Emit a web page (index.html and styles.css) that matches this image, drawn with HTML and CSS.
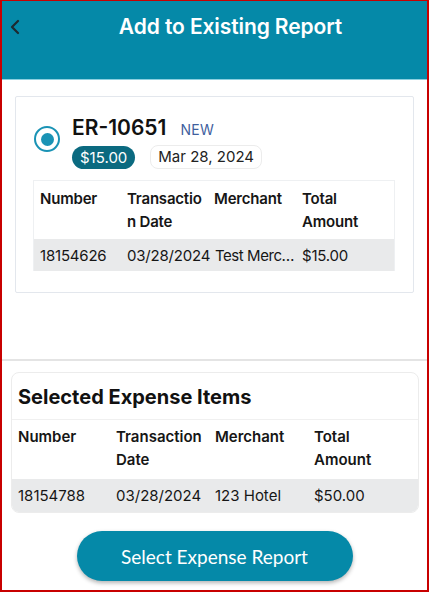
FILE: index.html
```html
<!DOCTYPE html>
<html>
<head>
<meta charset="utf-8">
<link rel="stylesheet" href="styles.css">
</head>
<body>
<div class="frame">
  <header class="topbar">
    <span class="back"><svg width="10" height="16" viewBox="0 0 10 16"><path d="M8 2 L2 8 L8 14" fill="none" stroke="#1d2a30" stroke-width="2.2" stroke-linecap="round" stroke-linejoin="round"/></svg></span>
    <h1 class="title">Add to Existing Report</h1>
  </header>

  <section class="report-card">
    <div class="report-head">
      <span class="radio"><span class="radio-dot"></span></span>
      <div class="report-info">
        <div class="report-title-row">
          <span class="report-id">ER-10651</span>
          <span class="report-status">NEW</span>
        </div>
        <div class="report-tags">
          <span class="amount-pill">$15.00</span>
          <span class="date-pill">Mar 28, 2024</span>
        </div>
      </div>
    </div>
    <div class="table t1">
      <div class="thead">
        <div class="cell">Number</div>
        <div class="cell wrap">Transaction Date</div>
        <div class="cell">Merchant</div>
        <div class="cell">Total Amount</div>
      </div>
      <div class="trow">
        <div class="cell">18154626</div>
        <div class="cell">03/28/2024</div>
        <div class="cell ellipsis">Test Merchant</div>
        <div class="cell">$15.00</div>
      </div>
    </div>
  </section>

  <div class="spacer"></div>
  <hr class="divider">

  <section class="selected-card">
    <h2 class="selected-title">Selected Expense Items</h2>
    <div class="table t2">
      <div class="thead">
        <div class="cell">Number</div>
        <div class="cell">Transaction Date</div>
        <div class="cell">Merchant</div>
        <div class="cell">Total Amount</div>
      </div>
      <div class="trow">
        <div class="cell">18154788</div>
        <div class="cell">03/28/2024</div>
        <div class="cell">123 Hotel</div>
        <div class="cell">$50.00</div>
      </div>
    </div>
  </section>

  <div class="actions">
    <button class="primary-btn">Select Expense Report</button>
  </div>
</div>
</body>
</html>
```

FILE: styles.css
```css
* { box-sizing: border-box; margin: 0; padding: 0; }
html, body { width: 429px; height: 592px; overflow: hidden; background: #fff; }
body { font-family: Inter, "Liberation Sans", sans-serif; color: #161616; }

.frame {
  width: 429px;
  height: 592px;
  border-style: solid;
  border-color: #c80000;
  border-width: 1px 2px 2px 2px;
  display: flex;
  flex-direction: column;
  background: #fff;
}

.topbar {
  height: 79px;
  flex: none;
  background: #0589a8;
  border-bottom: 1px solid #8ccfdf;
  display: flex;
  align-items: flex-start;
  justify-content: center;
  padding-left: 32px;
  position: relative;
}
.back {
  position: absolute;
  left: 8px;
  top: 18px;
  width: 10px;
  height: 16px;
  display: flex;
}
.title {
  margin-top: 13px;
  font-size: 21px;
  font-weight: 600;
  color: #fff;
  letter-spacing: -0.1px;
  line-height: 26px;
}

.report-card {
  margin: 16px 13px 0 13px;
  border: 1.5px solid #e3e7ed;
  border-radius: 2px;
  padding: 19px 17px 20px 17px;
  height: 197px;
  flex: none;
}
.report-head {
  display: flex;
  align-items: flex-start;
  gap: 12px;
}
.radio {
  margin-top: 10px;
  margin-left: 1px;
  width: 26px;
  height: 26px;
  border-radius: 50%;
  border: 2.5px solid #1a93b5;
  display: flex;
  align-items: center;
  justify-content: center;
  flex: none;
}
.radio-dot {
  width: 13px;
  height: 13px;
  border-radius: 50%;
  background: #1a93b5;
}
.report-info { display: flex; flex-direction: column; }
.report-title-row { display: flex; align-items: baseline; gap: 14px; }
.report-id { font-size: 21px; font-weight: 600; line-height: 24px; color: #111; }
.report-status { font-size: 14px; color: #3f5f9e; letter-spacing: 0.3px; }
.report-tags { display: flex; gap: 15px; margin-top: 5px; align-items: center; }
.amount-pill {
  background: #0b6a80;
  color: #fff;
  font-size: 15px;
  height: 23px;
  line-height: 23px;
  padding: 0 8px;
  border-radius: 12px;
}
.date-pill {
  border: 1.5px solid #ececec;
  color: #222;
  font-size: 15px;
  height: 24px;
  line-height: 21px;
  padding: 0 7px;
  border-radius: 8px;
}

.table { font-size: 15px; }
.thead, .trow { display: grid; }
.thead .cell { font-weight: 600; line-height: 23px; }
.trow { background: #e9eaeb; }

.t1 { margin-top: 11px; border: 1.5px solid #eef0f2; border-bottom: none; width: 362px; letter-spacing: -0.2px; }
.t1 .thead, .t1 .trow { grid-template-columns: 87px 87px 88px 87px; }
.t1 .thead { height: 58px; padding-top: 6px; }
.t1 .cell { padding-left: 6px; white-space: nowrap; }
.t1 .thead .cell { white-space: normal; }
.t1 .thead .cell.wrap { word-break: break-all; padding-right: 3px; }
.t1 .trow { height: 32px; align-items: center; }
.t1 .cell.ellipsis { overflow: hidden; text-overflow: ellipsis; padding-left: 7px; padding-right: 0; letter-spacing: -0.45px; }

.spacer { height: 66px; flex: none; }
.divider { border: none; border-top: 2px solid #e4e4e4; flex: none; }

.selected-card {
  margin: 11px 8px 0 9px;
  border: 1px solid #ececec;
  border-radius: 8px;
  overflow: hidden;
  flex: none;
}
.selected-title {
  font-size: 20px;
  font-weight: 700;
  line-height: 24px;
  padding: 12px 6px 10px 6px;
  color: #111;
  border-bottom: 1px solid #f0f0f0;
}
.t2 .thead, .t2 .trow { grid-template-columns: 98px 99px 99px 98px; }
.t2 .thead { height: 59px; padding-top: 5px; }
.t2 .cell { padding-left: 6px; }
.t2 .thead .cell { padding-right: 4px; }
.t2 .trow { height: 33px; align-items: center; }

.actions { display: flex; justify-content: center; margin-top: 18px; }
.primary-btn {
  width: 276px;
  height: 50px;
  border: none;
  border-radius: 25px;
  background: #0589a8;
  color: #fff;
  font-family: Lato, "Open Sans", sans-serif;
  font-size: 19px;
  box-shadow: 0 2px 4px rgba(0,0,0,0.3);
}
```
